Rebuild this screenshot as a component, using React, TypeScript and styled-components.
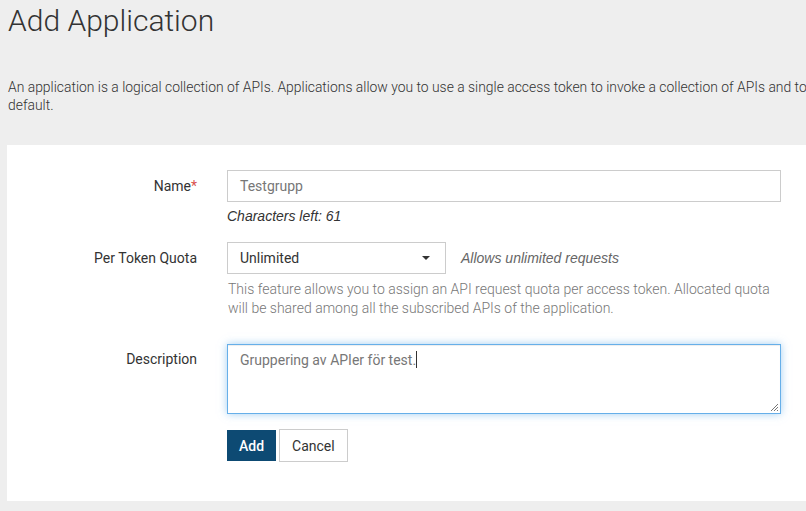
import React from "react";
import styled, { createGlobalStyle } from "styled-components";

const Global = createGlobalStyle`
  html, body { margin: 0; padding: 0; background: #eeeeee; overflow: hidden; }
  body { font-family: Roboto, "Noto Sans", sans-serif; color: #333; }
  * { box-sizing: border-box; }
`;

const Page = styled.div`
  width: 1000px;
  padding: 0 0 0 7px;
`;

const Title = styled.h1`
  margin: 0;
  padding: 3px 0 0 1px;
  font-size: 30px;
  font-weight: 300;
  line-height: 36px;
  color: #333;
`;

const Lead = styled.p`
  margin: 39px 0 0 1px;
  font-size: 13.9px;
  font-weight: 300;
  line-height: 18px;
  color: #333;
  white-space: nowrap;
`;

const Panel = styled.div`
  margin-top: 31px;
  background: #fff;
  padding: 25px 0 39px 0;
  width: 990px;
`;

const Form = styled.form`
  display: grid;
  grid-template-columns: 190px 554px;
  column-gap: 30px;
  row-gap: 0;
`;

const Label = styled.label<{ $top?: number }>`
  text-align: right;
  font-size: 14px;
  color: #333;
  padding-top: ${(p) => p.$top ?? 8}px;
  line-height: 16px;
`;

const Req = styled.span`
  color: #d9534f;
`;

const Field = styled.div<{ $mb?: number }>`
  margin-bottom: ${(p) => p.$mb ?? 0}px;
  display: flex;
  flex-direction: column;
`;

const TextInput = styled.div`
  height: 32px;
  border: 1px solid #ccc;
  padding: 0 12px;
  display: flex;
  align-items: center;
  font-size: 14px;
  color: #777;
`;

const Hint = styled.div`
  font-family: "Liberation Sans", Arial, sans-serif;
  font-style: italic;
  font-size: 14px;
  color: #333;
  margin-top: 5px;
  line-height: 18px;
`;

const SelectRow = styled.div`
  display: flex;
  align-items: center;
  gap: 15px;
`;

const Select = styled.div`
  width: 219px;
  height: 32px;
  border: 1px solid #ccc;
  padding: 0 12px;
  display: flex;
  align-items: center;
  justify-content: space-between;
  font-size: 14px;
  color: #333;
`;

const Caret = styled.span`
  width: 0;
  height: 0;
  border-left: 4px solid transparent;
  border-right: 4px solid transparent;
  border-top: 4px solid #333;
  margin-right: 3px;
`;

const SideNote = styled.span`
  font-family: "Liberation Sans", Arial, sans-serif;
  font-style: italic;
  font-size: 14px;
  color: #666;
`;

const Help = styled.div`
  font-size: 14px;
  font-weight: 300;
  color: #777;
  line-height: 19px;
  margin-top: 6px;
  padding-left: 1px;
`;

const TextArea = styled.div`
  height: 70px;
  border: 1px solid #66afe9;
  box-shadow: inset 0 1px 1px rgba(0, 0, 0, 0.075), 0 0 8px rgba(102, 175, 233, 0.6);
  padding: 6px 12px;
  font-size: 14px;
  color: #777;
  position: relative;
`;

const Cursor = styled.span`
  display: inline-block;
  width: 1px;
  height: 17px;
  background: #333;
  vertical-align: -3px;
`;

const Grip = styled.svg`
  position: absolute;
  right: 1px;
  bottom: 1px;
`;

const Buttons = styled.div`
  display: flex;
  gap: 3px;
  align-items: center;
`;

const Button = styled.button<{ $primary?: boolean }>`
  font-family: Roboto, sans-serif;
  font-size: 14px;
  height: ${(p) => (p.$primary ? 31 : 33)}px;
  padding: 0 ${(p) => (p.$primary ? 11 : 12)}px;
  border: 1px solid ${(p) => (p.$primary ? "#0d4a73" : "#ccc")};
  background: ${(p) => (p.$primary ? "#0d4a73" : "#fff")};
  color: ${(p) => (p.$primary ? "#fff" : "#333")};
  font-weight: ${(p) => (p.$primary ? 500 : 400)};
  border-radius: 0;
`;

export default function App() {
  return (
    <>
      <Global />
      <Page>
        <Title>Add Application</Title>
        <Lead>
          An application is a logical collection of APIs. Applications allow you to use a single access token to invoke a
          collection of APIs and to subscribe to one API multiple times with different SLA levels. The DefaultApplication is
          pre-created and allows unlimited access by
          <br />
          default.
        </Lead>
        <Panel>
          <Form>
            <Label $top={8}>
              Name<Req>*</Req>
            </Label>
            <Field $mb={17}>
              <TextInput>Testgrupp</TextInput>
              <Hint>Characters left: 61</Hint>
            </Field>

            <Label $top={8}>Per Token Quota</Label>
            <Field $mb={26}>
              <SelectRow>
                <Select>
                  Unlimited
                  <Caret />
                </Select>
                <SideNote>Allows unlimited requests</SideNote>
              </SelectRow>
              <Help>
                This feature allows you to assign an API request quota per access token. Allocated quota
                <br />
                will be shared among all the subscribed APIs of the application.
              </Help>
            </Field>

            <Label $top={7}>Description</Label>
            <Field $mb={15}>
              <TextArea>
                Gruppering av APIer för test.<Cursor />
                <Grip width="10" height="10" viewBox="0 0 10 10">
                  <path d="M9 2 L2 9 M9 5 L5 9 M9 8 L8 9" stroke="#777" strokeWidth="1" />
                </Grip>
              </TextArea>
            </Field>

            <div />
            <Buttons>
              <Button $primary type="button">Add</Button>
              <Button type="button">Cancel</Button>
            </Buttons>
          </Form>
        </Panel>
      </Page>
    </>
  );
}
